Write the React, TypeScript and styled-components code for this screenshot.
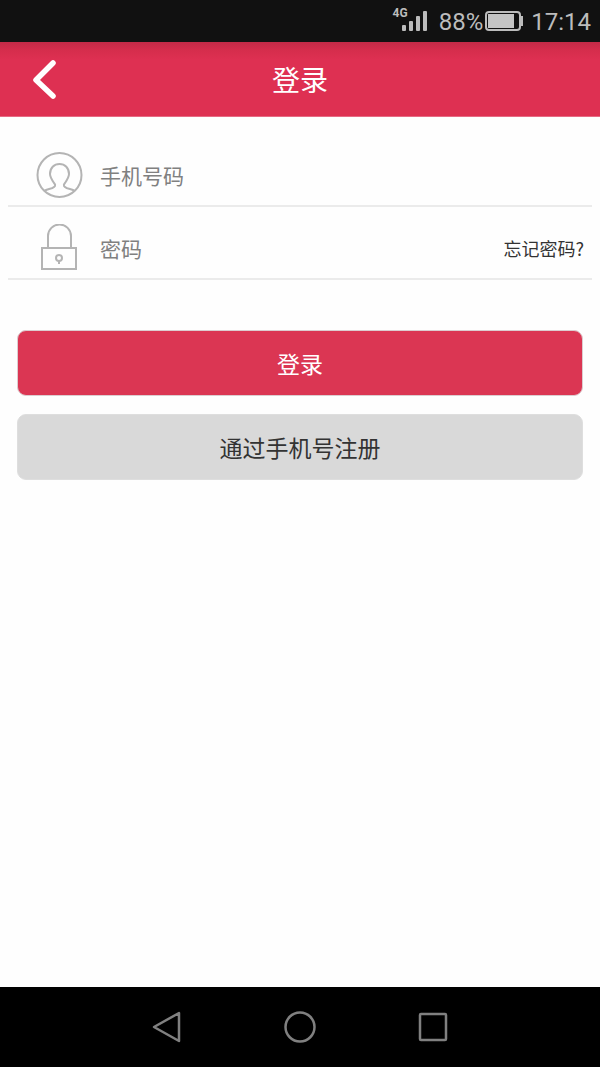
import React from "react";
import styled, { createGlobalStyle } from "styled-components";

const GlobalStyle = createGlobalStyle`
  *, *::before, *::after { box-sizing: border-box; }
  body {
    margin: 0;
    background: #fefefe;
    font-family: "Noto Sans CJK SC", Roboto, sans-serif;
  }
  button, input { font-family: inherit; }
`;

const Screen = styled.div`
  display: flex;
  flex-direction: column;
  min-height: 100vh;
`;

const StatusBar = styled.div`
  display: flex;
  align-items: center;
  justify-content: flex-end;
  height: 42px;
  padding: 0 9px;
  background: #111;
  color: #bcbcbc;
  font-family: Roboto, sans-serif;
`;

const StatusText = styled.span`
  font-size: 24px;
  font-weight: 400;
  line-height: 28px;
  padding-top: 2px;
`;

const Network = styled.div`
  display: flex;
  align-items: flex-start;
  height: 28px;
  margin-right: 11px;
`;

const NetworkLabel = styled.span`
  font-size: 12px;
  font-weight: 700;
  line-height: 12px;
  margin-right: -6px;
`;

const Battery = styled.svg`
  margin: 0 8px 0 2px;
`;

const Header = styled.header`
  display: grid;
  grid-template-columns: 88px 1fr 88px;
  align-items: center;
  height: 75px;
  background: linear-gradient(#c32a47, #d52d4c 8px, #de3052 18px, #de3052);
  border-bottom: 1px solid #e66a83;
`;

const BackButton = styled.button`
  display: flex;
  align-items: center;
  justify-content: center;
  height: 74px;
  padding: 0;
  border: 0;
  background: none;
  color: #fff;
`;

const Title = styled.h1`
  margin: 0;
  color: #fff;
  font-size: 28px;
  font-weight: 400;
  line-height: 40px;
  text-align: center;
`;

const Form = styled.form`
  flex: 1;
  padding: 17px 8px 0;
`;

const Field = styled.div`
  display: flex;
  align-items: center;
  height: 73px;
  padding: 10px 8px 0 27px;
  border-bottom: 2px solid #ebebeb;
`;

const FieldLabel = styled.label`
  display: flex;
  margin-right: 17px;
  color: #b4b4b4;
`;

const FieldInput = styled.input`
  flex: 1;
  min-width: 0;
  height: 48px;
  padding: 0;
  border: 0;
  outline: 0;
  background: none;
  color: #333;
  font-size: 21px;
  &::placeholder { color: #808080; opacity: 1; }
`;

const ForgotLink = styled.a`
  color: #333;
  font-size: 18px;
  line-height: 24px;
  text-decoration: none;
`;

const Actions = styled.div`
  display: flex;
  flex-direction: column;
  gap: 18px;
  padding: 50px 9px 24px;
`;

const ActionButton = styled.button<{ $primary?: boolean }>`
  height: 66px;
  padding: 0;
  border: 1px solid ${(p) => (p.$primary ? "#dccdd0" : "#dedede")};
  border-radius: 9px;
  background: ${(p) => (p.$primary ? "#db3653" : "#d9d9d9")};
  color: ${(p) => (p.$primary ? "#fff" : "#333")};
  font-size: 23px;
  line-height: 32px;
`;

const NavBar = styled.nav`
  display: flex;
  align-items: center;
  justify-content: center;
  gap: 85px;
  height: 80px;
  background: #000;
`;

const NavButton = styled.button`
  display: flex;
  align-items: center;
  justify-content: center;
  width: 48px;
  height: 48px;
  padding: 0;
  border: 0;
  background: none;
  color: #808080;
`;

const line = { fill: "none", stroke: "currentColor", strokeWidth: 2 } as const;

export default function App() {
  return (
    <Screen>
      <GlobalStyle />
      <StatusBar>
        <Network>
          <NetworkLabel>4G</NetworkLabel>
          <svg width="26" height="28" viewBox="0 0 26 28" fill="currentColor" aria-hidden="true">
            <rect x="0" y="18" width="4" height="6" rx="1" />
            <rect x="7" y="14" width="4" height="10" rx="1" />
            <rect x="14" y="9" width="4" height="15" rx="1" />
            <rect x="21" y="4" width="4" height="20" rx="1" />
          </svg>
        </Network>
        <StatusText>88%</StatusText>
        <Battery width="38" height="20" viewBox="0 0 38 20" aria-hidden="true">
          <rect x="1" y="1" width="34" height="18" rx="3" {...line} />
          <rect x="3" y="3" width="26" height="14" fill="#c4c4c4" />
          <path d="M35 6h2v8h-2" {...line} />
        </Battery>
        <StatusText>17:14</StatusText>
      </StatusBar>

      <Header>
        <BackButton type="button" aria-label="返回">
          <svg width="26" height="42" viewBox="0 0 26 42" aria-hidden="true">
            <path d="M22 5L5 22l17 16" fill="none" stroke="currentColor" strokeWidth="5.5" strokeLinecap="round" strokeLinejoin="round" />
          </svg>
        </BackButton>
        <Title>登录</Title>
      </Header>

      <Form onSubmit={(e) => e.preventDefault()}>
        <Field>
          <FieldLabel htmlFor="phone" aria-label="手机号码">
            <svg width="48" height="48" viewBox="0 0 48 48" aria-hidden="true">
              <circle cx="24.5" cy="24" r="22" {...line} />
              <path d="M9 40c3-2 8-2 10-4 2-1 1-3 0-4-2-3-4-6-4-9 0-6 4-10 9.500-10s9.500 4 9.500 10c0 3-2 6-4 9-1 1-2 3 0 4 2 2 7 2 10 4" {...line} />
            </svg>
          </FieldLabel>
          <FieldInput id="phone" type="tel" placeholder="手机号码" />
        </Field>
        <Field>
          <FieldLabel htmlFor="password" aria-label="密码">
            <svg width="48" height="48" viewBox="0 0 48 48" aria-hidden="true">
              <path d="M13 23V12a11 11 0 0 1 23 0v11" {...line} />
              <rect x="7" y="24" width="34" height="21" {...line} />
              <circle cx="24" cy="34" r="3" {...line} />
              <path d="M24 37v3" {...line} />
            </svg>
          </FieldLabel>
          <FieldInput id="password" type="password" placeholder="密码" />
          <ForgotLink href="#forgot">忘记密码?</ForgotLink>
        </Field>
        <Actions>
          <ActionButton type="submit" $primary>登录</ActionButton>
          <ActionButton type="button">通过手机号注册</ActionButton>
        </Actions>
      </Form>

      <NavBar>
        <NavButton type="button" aria-label="后退">
          <svg width="32" height="32" viewBox="0 0 32 32" aria-hidden="true">
            <path d="M28 2v28L3 16z" {...line} strokeWidth={2.5} strokeLinejoin="round" />
          </svg>
        </NavButton>
        <NavButton type="button" aria-label="主页">
          <svg width="32" height="32" viewBox="0 0 32 32" aria-hidden="true">
            <circle cx="16" cy="16" r="14.500" {...line} strokeWidth={2.5} />
          </svg>
        </NavButton>
        <NavButton type="button" aria-label="最近任务">
          <svg width="32" height="32" viewBox="0 0 32 32" aria-hidden="true">
            <rect x="3" y="3" width="26" height="26" rx="1" {...line} strokeWidth={2.5} />
          </svg>
        </NavButton>
      </NavBar>
    </Screen>
  );
}
